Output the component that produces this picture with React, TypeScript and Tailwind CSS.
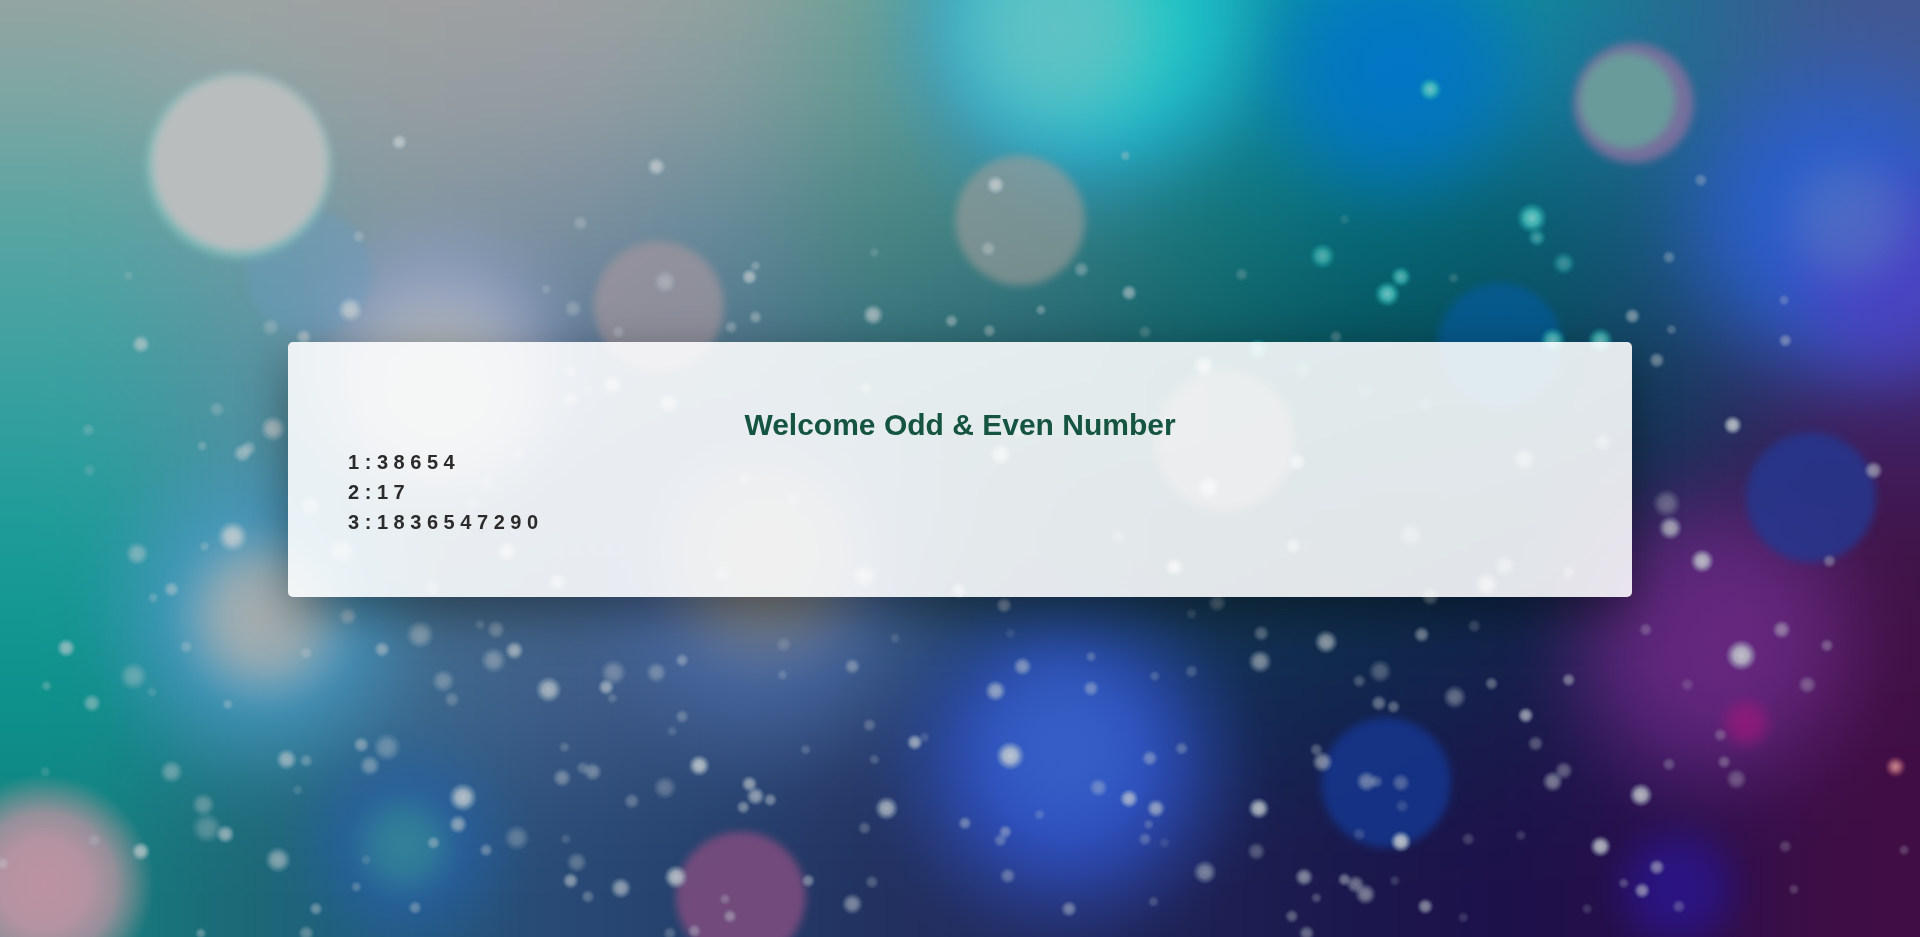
const BASE: string[][] = [
  ['#a3a3a1', '#a5a3a2', '#a5a2a2', '#a3a2a2', '#9aa5a0', '#6fa598', '#40a8a8', '#109ea2', '#0590b0', '#0c9299', '#256e90', '#43568f'],
  ['#82a6a3', '#93a4a4', '#989fa1', '#979da3', '#889d9f', '#629a94', '#45989c', '#108f9c', '#0a82ac', '#127f9f', '#256a90', '#3f5a98'],
  ['#55a4a2', '#6a9ba4', '#8296a0', '#7b8f9f', '#65899a', '#488582', '#387d84', '#177478', '#066874', '#075c6c', '#1c5680', '#3558a8'],
  ['#38a0a0', '#5092a0', '#7090a8', '#5a7595', '#4c7088', '#2f6a78', '#245f6a', '#105a62', '#074c58', '#0a4858', '#183a60', '#40256c'],
  ['#1a9b98', '#4590a6', '#4a6f88', '#45688a', '#3d5d80', '#2c5570', '#1f475c', '#143c50', '#0e344b', '#0c2c4c', '#251f52', '#401448'],
  ['#0c918b', '#2d7e92', '#3d6a90', '#3f5c88', '#34507e', '#2a4270', '#1d3660', '#142c55', '#11254f', '#171c4a', '#33175a', '#400f45'],
  ['#158080', '#1c6876', '#225a7c', '#294974', '#243f6b', '#22305f', '#222a5c', '#1d2052', '#1b174c', '#1d104a', '#2a0f4b', '#400d45'],
];
const ROW_TOP = [-140, 0, 127, 255, 382, 510, 637];
const ROW_BOTTOM = [0, 127, 255, 382, 510, 637, 900];

type Glow = [x: number, y: number, r: number, color: string, opacity: number];

const WIDE_GLOWS: Glow[] = [
  [880, 25, 195, '#2a9fd2', 1],
  [905, 10, 165, '#18c8c4', 1],
  [862, 22, 130, '#6ac2c4', 0.85],
  [1142, 58, 145, '#0074c8', 0.85],
  [1500, 180, 180, '#2a5fd0', 0.95],
  [1552, 225, 130, '#543cc4', 0.7],
  [1510, 180, 75, '#5a82c0', 0.5],
  [360, 290, 145, '#93a0c8', 0.9],
  [358, 318, 120, '#aeb4b6', 1],
  [215, 505, 165, '#4a9cc8', 0.85],
  [216, 503, 90, '#a4aeb0', 1],
  [625, 480, 190, '#5272b0', 0.75],
  [625, 452, 120, '#868682', 0.95],
  [872, 622, 180, '#3157d2', 0.95],
  [868, 608, 95, '#3a66bc', 0.5],
  [1402, 522, 175, '#6e2a86', 0.85],
  [1426, 590, 28, '#96197c', 0.8],
  [332, 690, 115, '#2861a8', 0.75],
  [330, 690, 55, '#348a96', 0.75],
  [1370, 725, 72, '#2a1590', 0.8],
];

const DISCS: Glow[] = [
  [252, 222, 52, '#6a9cc0', 0.4],
  [195, 135, 77, '#84c0be', 0.75],
  [196, 133, 73, '#b9bdbe', 1],
  [538, 250, 54, '#a3959e', 0.7],
  [833, 180, 54, '#a09c9a', 0.62],
  [1334, 84, 50, '#85729f', 0.85],
  [1329, 82, 40, '#699b9b', 1],
  [1225, 282, 52, '#065b98', 0.75],
  [1000, 360, 58, '#a08a90', 0.55],
  [1479, 406, 54, '#26378e', 0.85],
  [1132, 639, 54, '#153489', 0.9],
  [605, 732, 54, '#7b4d7e', 0.9],
];

type Spark = [x: number, y: number, r: number, opacity: number];

const SPARKS: Spark[] = [
  [326, 116, 6, 0.75], [536, 136, 7, 0.75], [474, 182, 6, 0.35], [293, 193, 5, 0.35], [105, 225, 4, 0.2],
  [286, 253, 10, 0.8], [221, 267, 7, 0.35], [248, 275, 6, 0.6], [115, 281, 7, 0.65], [446, 236, 4, 0.25],
  [468, 252, 7, 0.35], [505, 271, 5, 0.35], [543, 230, 9, 0.45], [612, 226, 6, 0.7], [617, 217, 4, 0.35],
  [617, 259, 5, 0.45], [597, 267, 5, 0.4], [713, 257, 8, 0.7], [714, 206, 4, 0.2], [813, 151, 7, 0.8],
  [807, 203, 6, 0.45], [883, 220, 6, 0.4], [922, 239, 6, 0.6], [850, 253, 4, 0.4], [777, 262, 5, 0.5],
  [808, 270, 5, 0.45], [919, 127, 4, 0.35], [1014, 224, 5, 0.25], [935, 271, 5, 0.25], [1389, 147, 5, 0.35],
  [1363, 210, 5, 0.35], [1457, 245, 4, 0.3], [1333, 258, 6, 0.55], [1365, 269, 4, 0.3], [1458, 278, 5, 0.45],
  [1353, 294, 6, 0.5], [1091, 275, 5, 0.3], [1098, 179, 4, 0.15], [1187, 227, 4, 0.2], [1415, 347, 7, 0.85],
  [1530, 384, 7, 0.6], [1361, 411, 11, 0.4], [1364, 431, 9, 0.75], [1390, 458, 9, 0.85], [1494, 458, 5, 0.4],
  [223, 350, 10, 0.75], [198, 370, 7, 0.6], [203, 366, 6, 0.45], [177, 334, 6, 0.3], [165, 364, 4, 0.3],
  [72, 351, 5, 0.25], [73, 384, 5, 0.2], [190, 438, 12, 0.85], [112, 452, 9, 0.5], [167, 446, 4, 0.3],
  [140, 481, 6, 0.5], [125, 488, 4, 0.3], [54, 529, 7, 0.65], [152, 528, 5, 0.35], [109, 552, 11, 0.4],
  [75, 574, 7, 0.5], [38, 560, 4, 0.3], [124, 565, 4, 0.2], [186, 575, 4, 0.35], [250, 533, 5, 0.35],
  [284, 503, 7, 0.5], [312, 530, 6, 0.55], [343, 518, 11, 0.5], [405, 514, 7, 0.4], [392, 510, 4, 0.25],
  [403, 539, 10, 0.45], [420, 531, 7, 0.7], [362, 556, 9, 0.4], [369, 571, 6, 0.3], [448, 563, 10, 0.75],
  [501, 549, 10, 0.4], [495, 561, 6, 0.65], [500, 570, 4, 0.25], [234, 620, 8, 0.65], [250, 621, 5, 0.35],
  [295, 608, 6, 0.5], [316, 610, 11, 0.4], [302, 625, 8, 0.45], [140, 630, 9, 0.45], [166, 657, 9, 0.4],
  [169, 676, 12, 0.35], [184, 681, 7, 0.65], [115, 695, 7, 0.75], [227, 702, 10, 0.6], [77, 686, 5, 0.25],
  [378, 651, 11, 0.85], [374, 673, 7, 0.6], [354, 688, 5, 0.45], [397, 694, 5, 0.4], [422, 684, 10, 0.35],
  [291, 724, 4, 0.3], [258, 742, 5, 0.45], [339, 741, 5, 0.4], [459, 635, 7, 0.45], [484, 630, 7, 0.45],
  [476, 627, 5, 0.3], [461, 610, 4, 0.25], [516, 654, 6, 0.35], [462, 685, 4, 0.2], [471, 704, 8, 0.35],
  [466, 719, 6, 0.6], [480, 732, 5, 0.35], [507, 725, 8, 0.65], [243, 645, 4, 0.2], [37, 630, 4, 0.2],
  [299, 702, 4, 0.2], [2, 705, 5, 0.4], [250, 762, 6, 0.4], [164, 762, 4, 0.4],
  [536, 549, 8, 0.4], [557, 539, 5, 0.45], [571, 625, 8, 0.85], [543, 643, 9, 0.35], [557, 585, 5, 0.35],
  [612, 640, 6, 0.65], [617, 650, 7, 0.65], [629, 653, 5, 0.5], [607, 659, 5, 0.5], [549, 597, 4, 0.2],
  [552, 716, 9, 0.85], [640, 526, 6, 0.25], [639, 551, 4, 0.25], [696, 544, 6, 0.45], [731, 521, 4, 0.2],
  [710, 592, 5, 0.3], [747, 606, 6, 0.7], [755, 602, 4, 0.2], [658, 612, 4, 0.25], [714, 620, 4, 0.25],
  [724, 660, 9, 0.75], [706, 676, 5, 0.3], [660, 719, 5, 0.5], [696, 738, 8, 0.55], [712, 720, 5, 0.3],
  [592, 734, 4, 0.3], [596, 748, 5, 0.45], [567, 760, 5, 0.4], [547, 762, 5, 0.3], [820, 494, 6, 0.5],
  [835, 544, 7, 0.55], [813, 564, 8, 0.65], [891, 536, 4, 0.3], [891, 562, 6, 0.45], [943, 552, 4, 0.25],
  [825, 617, 11, 0.9], [897, 643, 7, 0.4], [922, 652, 7, 0.75], [944, 660, 7, 0.65], [939, 619, 6, 0.45],
  [965, 611, 5, 0.35], [938, 673, 4, 0.25], [935, 685, 5, 0.3], [951, 688, 4, 0.15], [788, 672, 5, 0.45],
  [821, 679, 5, 0.45], [817, 686, 5, 0.35], [849, 665, 4, 0.25], [823, 715, 6, 0.4], [873, 742, 6, 0.5],
  [984, 712, 9, 0.55], [942, 736, 4, 0.25], [994, 492, 7, 0.35], [973, 501, 4, 0.2], [1030, 517, 6, 0.4],
  [1029, 540, 9, 0.6], [973, 548, 5, 0.25], [1028, 660, 8, 0.85], [1026, 695, 7, 0.35], [825, 517, 4, 0.15],
  [1083, 524, 9, 0.7], [1161, 518, 6, 0.55], [1204, 511, 5, 0.25], [1168, 487, 7, 0.45], [1127, 548, 9, 0.35],
  [1110, 556, 5, 0.3], [1126, 574, 6, 0.45], [1138, 577, 5, 0.4], [1188, 569, 9, 0.45], [1218, 558, 5, 0.4],
  [1281, 555, 5, 0.5], [1246, 584, 6, 0.7], [1254, 607, 6, 0.35], [1277, 629, 7, 0.4], [1268, 638, 8, 0.55],
  [1080, 622, 8, 0.6], [1075, 612, 5, 0.35], [1116, 638, 8, 0.5], [1124, 638, 5, 0.3], [1144, 639, 7, 0.35],
  [1145, 658, 5, 0.2], [1144, 687, 8, 0.9], [1110, 681, 5, 0.2], [1340, 649, 9, 0.85], [1307, 691, 8, 0.85],
  [1353, 708, 6, 0.55], [1341, 727, 6, 0.6], [1326, 721, 4, 0.3], [1371, 740, 5, 0.3], [1296, 742, 4, 0.2],
  [1164, 740, 6, 0.6], [1065, 716, 7, 0.6], [1098, 718, 5, 0.5], [1107, 722, 7, 0.5], [1115, 730, 8, 0.55],
  [1075, 733, 4, 0.3], [1055, 748, 5, 0.4], [1067, 762, 6, 0.45], [1139, 719, 4, 0.2], [1199, 685, 5, 0.25],
  [1242, 682, 4, 0.2], [1195, 749, 4, 0.2], [1422, 535, 12, 0.9], [1455, 514, 7, 0.5], [1492, 527, 5, 0.35],
  [1476, 559, 7, 0.35], [1344, 514, 5, 0.3], [1378, 559, 5, 0.2], [1405, 600, 5, 0.3], [1408, 622, 5, 0.35],
  [1418, 636, 8, 0.35], [1363, 624, 5, 0.3], [1458, 691, 5, 0.25], [1465, 726, 4, 0.25], [1555, 694, 4, 0.25],
  [500, 314, 8, 0.7], [466, 303, 6, 0.4], [466, 326, 7, 0.5], [480, 318, 5, 0.3], [546, 329, 8, 0.7],
  [423, 370, 6, 0.4], [279, 450, 10, 0.7], [253, 413, 8, 0.6], [414, 450, 8, 0.7], [455, 475, 7, 0.6],
  [590, 468, 6, 0.5], [706, 470, 10, 0.7], [783, 482, 6, 0.6], [817, 371, 8, 0.8], [833, 353, 5, 0.4],
  [987, 398, 9, 0.8], [959, 463, 7, 0.8], [1059, 377, 7, 0.7], [1245, 375, 9, 0.6], [1309, 361, 7, 0.5],
  [1152, 437, 9, 0.45], [1229, 462, 8, 0.5], [1214, 477, 9, 0.7], [1281, 467, 5, 0.4], [913, 438, 6, 0.3],
  [983, 299, 8, 0.8], [1056, 446, 6, 0.6], [707, 317, 5, 0.4], [648, 408, 6, 0.4], [608, 391, 6, 0.4],
  [353, 480, 6, 0.5], [398, 395, 7, 0.3], [386, 411, 6, 0.3],
];

const TEAL_SPARKS: Spark[] = [
  [1168, 73, 9, 0.9], [1251, 178, 12, 0.95], [1255, 194, 7, 0.55], [1277, 215, 9, 0.5], [1080, 209, 10, 0.7],
  [1144, 226, 8, 0.75], [1133, 240, 10, 0.9], [1268, 278, 10, 0.9], [1307, 278, 10, 0.9], [1027, 285, 8, 0.7],
  [1064, 302, 7, 0.4], [1115, 319, 7, 0.3], [1164, 330, 6, 0.3],
];

const CELLS = BASE.flatMap((row, r) =>
  row.map((color, c) => {
    const first = c === 0;
    const last = c === row.length - 1;
    const left = first ? -160 : Math.round(c * 130.67);
    const right = last ? 1730 : Math.round((c + 1) * 130.67);
    return { color, x: left, y: ROW_TOP[r], w: right - left + 1, h: ROW_BOTTOM[r] - ROW_TOP[r] + 1 };
  }),
);

function BokehBackground() {
  return (
    <svg
      aria-hidden="true"
      className="absolute inset-0 h-full w-full"
      viewBox="0 0 1568 765"
      preserveAspectRatio="none"
    >
      <defs>
        <filter id="wash" filterUnits="userSpaceOnUse" x="-160" y="-140" width="1890" height="1040" colorInterpolationFilters="sRGB">
          <feGaussianBlur stdDeviation="50" />
        </filter>
        <filter id="soft" filterUnits="userSpaceOnUse" x="-100" y="-100" width="1768" height="965" colorInterpolationFilters="sRGB">
          <feGaussianBlur stdDeviation="3.6" />
        </filter>
        {WIDE_GLOWS.map(([, , , color, opacity], i) => (
          <radialGradient key={i} id={`glow-${i}`}>
            <stop offset="0" stopColor={color} stopOpacity={opacity} />
            <stop offset="0.2" stopColor={color} stopOpacity={opacity * 0.95} />
            <stop offset="0.35" stopColor={color} stopOpacity={opacity * 0.84} />
            <stop offset="0.5" stopColor={color} stopOpacity={opacity * 0.62} />
            <stop offset="0.65" stopColor={color} stopOpacity={opacity * 0.34} />
            <stop offset="0.8" stopColor={color} stopOpacity={opacity * 0.12} />
            <stop offset="0.9" stopColor={color} stopOpacity={opacity * 0.03} />
            <stop offset="1" stopColor={color} stopOpacity="0" />
          </radialGradient>
        ))}
        <radialGradient id="pink">
          <stop offset="0" stopColor="#bd92a2" />
          <stop offset="0.4" stopColor="#b893a2" stopOpacity="0.98" />
          <stop offset="0.65" stopColor="#ab929e" stopOpacity="0.85" />
          <stop offset="0.82" stopColor="#9c939a" stopOpacity="0.5" />
          <stop offset="1" stopColor="#8c9696" stopOpacity="0" />
        </radialGradient>
        <radialGradient id="spark">
          <stop offset="0" stopColor="#cdd2d2" />
          <stop offset="0.45" stopColor="#c6ced2" stopOpacity="0.85" />
          <stop offset="1" stopColor="#a9c4d0" stopOpacity="0" />
        </radialGradient>
        <radialGradient id="teal">
          <stop offset="0" stopColor="#80ccca" />
          <stop offset="0.45" stopColor="#4cc4bf" stopOpacity="0.85" />
          <stop offset="1" stopColor="#12a8a8" stopOpacity="0" />
        </radialGradient>
        <radialGradient id="rose">
          <stop offset="0" stopColor="#c98890" />
          <stop offset="0.4" stopColor="#b87080" stopOpacity="0.8" />
          <stop offset="1" stopColor="#a04060" stopOpacity="0" />
        </radialGradient>
      </defs>
      <g filter="url(#wash)">
        {CELLS.map((cell, i) => (
          <rect key={i} x={cell.x} y={cell.y} width={cell.w} height={cell.h} fill={cell.color} />
        ))}
      </g>
      {WIDE_GLOWS.map(([x, y, r], i) => (
        <circle key={i} cx={x} cy={y} r={r} fill={`url(#glow-${i})`} />
      ))}
      <circle cx="36" cy="722" r="90" fill="url(#pink)" />
      <g filter="url(#soft)">
        {DISCS.map(([x, y, r, color, opacity], i) => (
          <circle key={i} cx={x} cy={y} r={r - 1} fill={color} opacity={opacity} />
        ))}
      </g>
      {SPARKS.map(([x, y, r, opacity], i) => (
        <circle key={i} cx={x} cy={y} r={r + 1} fill="url(#spark)" opacity={opacity} />
      ))}
      {TEAL_SPARKS.map(([x, y, r, opacity], i) => (
        <circle key={i} cx={x} cy={y} r={r + 1} fill="url(#teal)" opacity={opacity} />
      ))}
      <circle cx="1548" cy="626" r="9" fill="url(#rose)" />
    </svg>
  );
}

const LINES = ['1 : 3 8 6 5 4', '2 : 1 7', '3 : 1 8 3 6 5 4 7 2 9 0'];

export default function App() {
  return (
    <div className="relative flex min-h-screen items-center justify-center overflow-hidden bg-[#1d3660] pt-px font-['Liberation_Sans',Arial,sans-serif]">
      <BokehBackground />
      <main className="relative w-[70%] rounded-[5px] bg-white/88 p-[60px] font-bold shadow-[0_16px_48px_rgba(0,0,0,0.4)]">
        <h1 className="text-center text-[30px] leading-[45px] text-[#145440]">Welcome Odd &amp; Even Number</h1>
        {LINES.map((line) => (
          <p key={line} className="text-xl leading-[30px] text-[#2b2b2b]">
            {line}
          </p>
        ))}
      </main>
    </div>
  );
}
